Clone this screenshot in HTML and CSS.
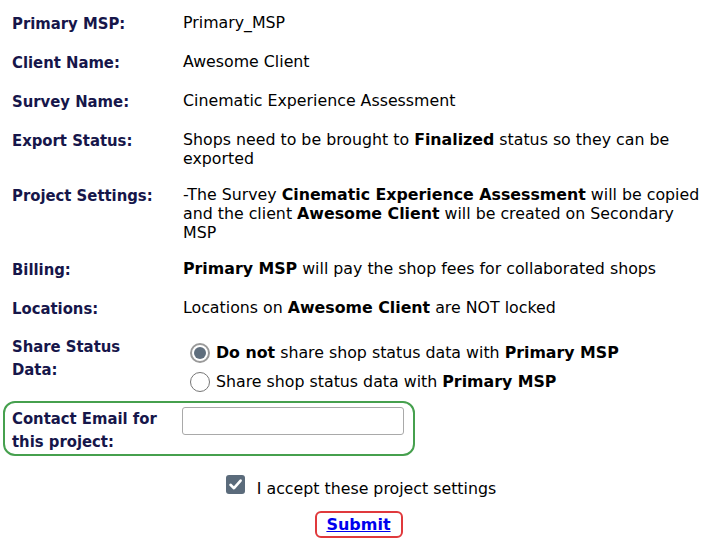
FILE: index.html
```html
<!DOCTYPE html>
<html lang="en">
<head>
<meta charset="utf-8">
<title>Project Settings</title>
<link rel="stylesheet" href="styles.css">
</head>
<body>
<div class="form">
  <div class="row">
    <div class="label">Primary MSP:</div>
    <div class="value">Primary_MSP</div>
  </div>
  <div class="row">
    <div class="label">Client Name:</div>
    <div class="value">Awesome Client</div>
  </div>
  <div class="row">
    <div class="label">Survey Name:</div>
    <div class="value">Cinematic Experience Assessment</div>
  </div>
  <div class="row">
    <div class="label">Export Status:</div>
    <div class="value">Shops need to be brought to <b>Finalized</b> status so they can be exported</div>
  </div>
  <div class="row">
    <div class="label">Project Settings:</div>
    <div class="value">-The Survey <b>Cinematic Experience Assessment</b> will be copied and the client <b>Awesome Client</b> will be created on Secondary MSP</div>
  </div>
  <div class="row">
    <div class="label">Billing:</div>
    <div class="value"><b>Primary MSP</b> will pay the shop fees for collaborated shops</div>
  </div>
  <div class="row">
    <div class="label">Locations:</div>
    <div class="value">Locations on <b>Awesome Client</b> are NOT locked</div>
  </div>
  <div class="row share">
    <div class="label">Share Status Data:</div>
    <div class="value radios">
      <div class="option"><span class="radio checked"></span><span><b>Do not</b> share shop status data with <b>Primary MSP</b></span></div>
      <div class="option"><span class="radio"></span><span>Share shop status data with <b>Primary MSP</b></span></div>
    </div>
  </div>
  <div class="row contact">
    <div class="label">Contact Email for this project:</div>
    <div class="field"><input type="text" class="email"></div>
  </div>
  <div class="accept">
    <span class="checkbox"><svg viewBox="0 0 19 19" width="19" height="19"><path d="M4.5 9.8 L8 13.2 L14.6 5.6" fill="none" stroke="#fff" stroke-width="2.6" stroke-linecap="round" stroke-linejoin="round"/></svg></span>
    <span class="accept-text">I accept these project settings</span>
  </div>
  <div class="submit-wrap">
    <button type="button" class="submit">Submit</button>
  </div>
</div>
</body>
</html>
```

FILE: styles.css
```css
html, body {
  margin: 0;
  padding: 0;
  background: #ffffff;
}

.form {
  padding: 4px 0 0 12px;
  font-family: "DejaVu Sans", Verdana, sans-serif;
  color: #000;
}

.row {
  display: grid;
  grid-template-columns: 171px 1fr;
  padding: 8px 0;
  align-items: start;
}

.label {
  font-family: "DejaVu Sans Condensed", "DejaVu Sans", Tahoma, sans-serif;
  font-stretch: semi-condensed;
  font-weight: bold;
  font-size: 16.5px;
  line-height: 23px;
  color: #16164a;
}

.value {
  font-size: 15.8px;
  line-height: 19px;
  padding-top: 1px;
}

.value b {
  font-weight: bold;
}

.share {
  padding-top: 7px;
  padding-bottom: 5px;
}

.share .label {
  width: 125px;
}

.radios {
  padding-top: 3px;
  padding-left: 7px;
}

.option {
  display: flex;
  align-items: center;
  height: 29px;
  gap: 6px;
}

.radio {
  box-sizing: border-box;
  width: 20px;
  height: 20px;
  border-radius: 50%;
  border: 1.5px solid #767676;
  background: #fff;
  flex: none;
  display: flex;
  align-items: center;
  justify-content: center;
}

.radio.checked {
  border: 2px solid #9a9a9a;
}

.radio.checked::after {
  content: "";
  width: 12px;
  height: 12px;
  border-radius: 50%;
  background: #5f6e7d;
}

.contact {
  box-sizing: border-box;
  width: 412px;
  margin-left: -9px;
  border: 2px solid #46a04e;
  border-radius: 12px;
  padding: 4px 0 1px 7px;
  grid-template-columns: 170px 1fr;
}

.contact .label {
  width: 165px;
}

.email {
  box-sizing: border-box;
  display: block;
  width: 222px;
  height: 28px;
  margin: 0;
  border: 1px solid #a9a9a9;
  border-radius: 3px;
  background: #fff;
  padding: 2px 6px;
  font-family: "DejaVu Sans", sans-serif;
  font-size: 14px;
}

.accept {
  display: flex;
  justify-content: center;
  align-items: flex-start;
  gap: 12px;
  margin-top: 19px;
  padding-left: 5px;
}

.checkbox {
  width: 19px;
  height: 19px;
  border-radius: 3px;
  background: #5b6b7b;
  display: block;
  flex: none;
}

.checkbox svg {
  display: block;
}

.accept-text {
  font-size: 15.8px;
  line-height: 19px;
  padding-top: 4px;
}

.submit-wrap {
  display: flex;
  justify-content: center;
  margin-top: 13px;
  padding-left: 0;
}

.submit {
  box-sizing: border-box;
  width: 88px;
  height: 27px;
  border: 2px solid #e0393c;
  border-radius: 6px;
  background: #fff;
  padding: 0;
  font-family: "DejaVu Sans", Verdana, sans-serif;
  font-weight: bold;
  font-size: 16px;
  line-height: 23px;
  color: #0000ee;
  text-decoration: underline;
  cursor: pointer;
}
```
